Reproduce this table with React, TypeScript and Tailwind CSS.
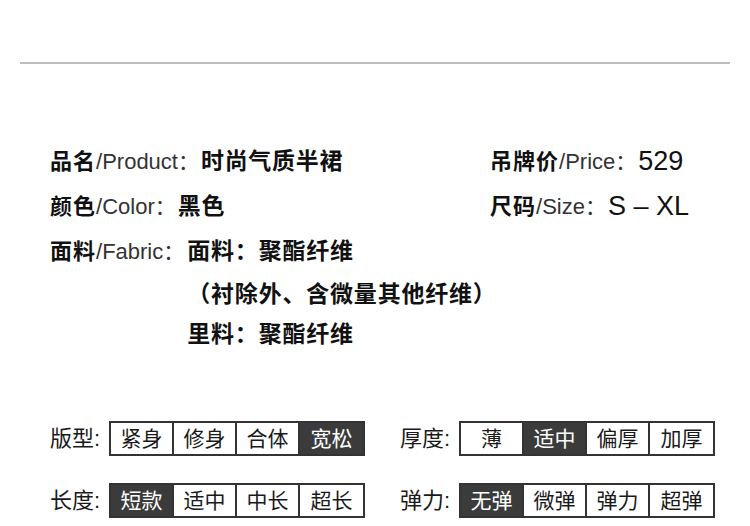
import React from "react";

const CJK = { fontFamily: '"Liberation Sans", "Noto Sans CJK SC", sans-serif' };

function Opts({ label, items, sel }: { label: string; items: string[]; sel: number }) {
  return (
    <div className="flex items-center">
      <div className="w-[59px] text-[22px] leading-none text-[#1a1a1a]">{label}</div>
      <div className="w-[256px] h-[35px] grid grid-cols-4 border-2 border-[#333] divide-x-2 divide-[#333]">
        {items.map((t, i) => (
          <div
            key={t}
            className={`flex items-center justify-center text-[21px] leading-none ${
              i === sel ? "bg-[#3b3b3b] text-white" : "bg-white text-[#1a1a1a]"
            }`}
          >
            {t}
          </div>
        ))}
      </div>
    </div>
  );
}

function Row({ k, en, children }: { k: string; en: string; children: React.ReactNode }) {
  return (
    <div className="flex items-center h-[45px] whitespace-nowrap">
      <span className="font-bold text-[22px] tracking-[1px] text-[#111]">{k}</span>
      <span className="text-[22px] text-[#333]">/{en}</span>
      <span className="text-[21px] text-[#333] mr-[2px]">：</span>
      {children}
    </div>
  );
}

export default function App() {
  return (
    <div className="w-[750px] h-[526px] bg-white overflow-hidden" style={CJK}>
      <div className="pt-[62px] px-[20px]">
        <div className="h-[2px] bg-[#bdbdbd]" />
      </div>
      <div className="mt-[75px] flex">
        <div className="pl-[50px] w-[490px]">
          <Row k="品名" en="Product">
            <span className="font-bold text-[23px] tracking-[0.7px] text-[#111]">时尚气质半裙</span>
          </Row>
          <Row k="颜色" en="Color">
            <span className="font-bold text-[23px] tracking-[0.7px] text-[#111]">黑色</span>
          </Row>
          <div className="flex items-start whitespace-nowrap">
            <div className="flex items-center h-[45px]">
              <span className="font-bold text-[22px] tracking-[1px] text-[#111]">面料</span>
              <span className="text-[22px] text-[#333]">/Fabric</span>
              <span className="text-[21px] text-[#333] mr-[3px]">：</span>
            </div>
            <div className="flex flex-col font-bold text-[23px] tracking-[0.8px] text-[#111]">
              <div className="h-[45px] flex items-center">面料：聚酯纤维</div>
              <div className="h-[40px] flex items-center">（衬除外、含微量其他纤维）</div>
              <div className="h-[41px] flex items-center">里料：聚酯纤维</div>
            </div>
          </div>
        </div>
        <div>
          <Row k="吊牌价" en="Price">
            <span className="text-[27px] text-[#111]">529</span>
          </Row>
          <Row k="尺码" en="Size">
            <span className="text-[27px] text-[#111]">S – XL</span>
          </Row>
        </div>
      </div>
      <div className="mt-[66px] flex flex-col gap-[27px]">
        <div className="flex">
          <div className="pl-[50px] w-[400px]">
            <Opts label="版型:" items={["紧身", "修身", "合体", "宽松"]} sel={3} />
          </div>
          <Opts label="厚度:" items={["薄", "适中", "偏厚", "加厚"]} sel={1} />
        </div>
        <div className="flex">
          <div className="pl-[50px] w-[400px]">
            <Opts label="长度:" items={["短款", "适中", "中长", "超长"]} sel={0} />
          </div>
          <Opts label="弹力:" items={["无弹", "微弹", "弹力", "超弹"]} sel={0} />
        </div>
      </div>
    </div>
  );
}
